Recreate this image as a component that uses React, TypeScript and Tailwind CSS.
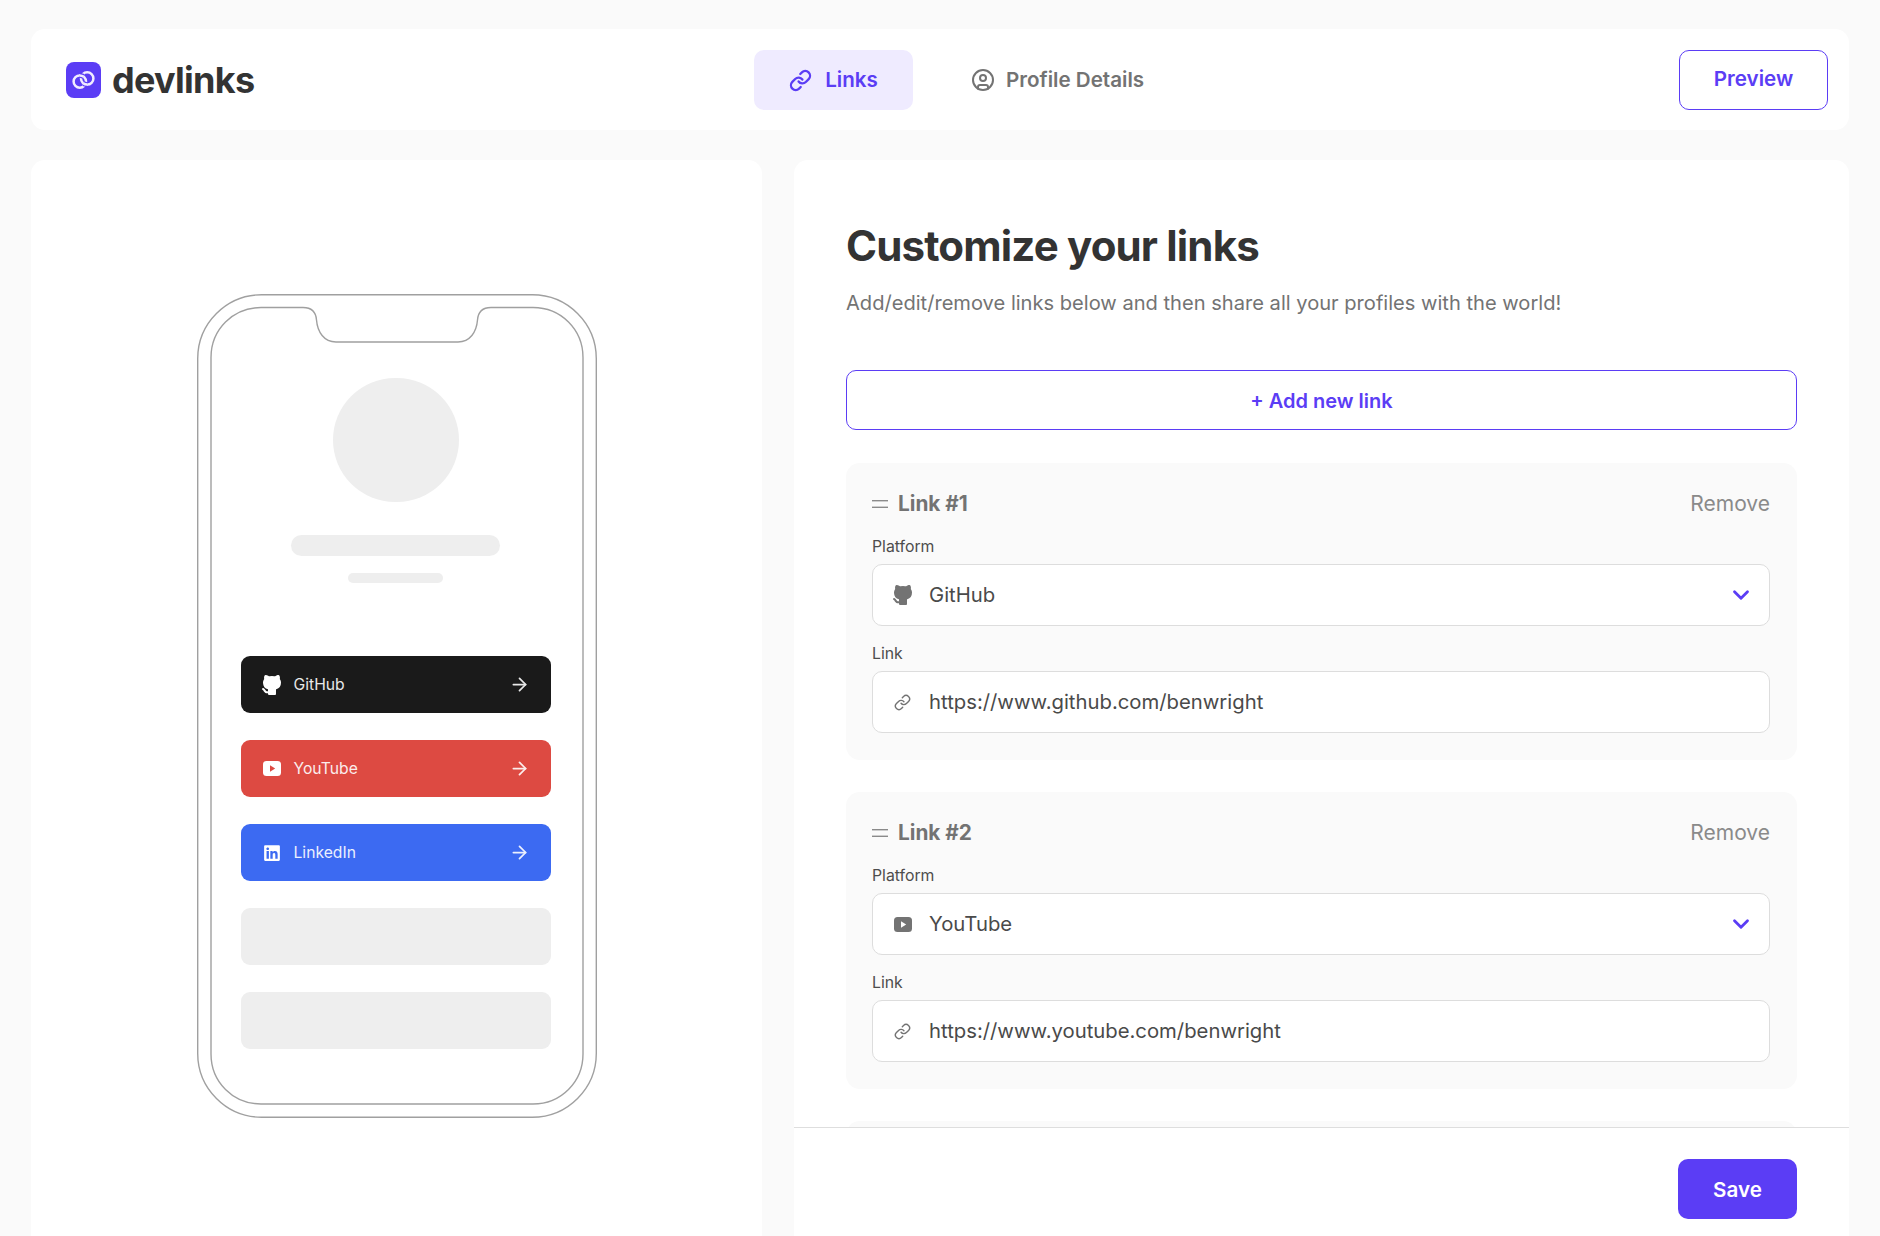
import { ArrowRight, ChevronDown, CircleUser, Link as LinkIcon } from "lucide-react";
import { FaLinkedin } from "react-icons/fa";
import { TbBrandGithubFilled } from "react-icons/tb";

function Logo() {
  return (
    <svg width="35" height="36" viewBox="0 0 35 36" className="shrink-0">
      <rect width="35" height="36" rx="8" fill="#5B3DF5" />
      <g fill="none" stroke="#f1edff" strokeWidth="2.5">
        <circle cx="13.8" cy="19.6" r="6.2" />
        <circle cx="21.2" cy="16.4" r="6.2" />
        <path d="M13.7 13.1 17.5 14.3M17.5 21.7 21.3 22.9" stroke="#5B3DF5" strokeWidth="5" />
        <path d="M13.2 13.4Q15.8 13.2 17.8 14.8M17.2 21.2Q19.2 22.8 21.8 22.6" />
      </g>
    </svg>
  );
}

function YouTubeIcon({ play }: { play: string }) {
  return (
    <svg width="18" height="15" viewBox="0 0 18 15" className="shrink-0">
      <rect width="18" height="15" rx="3.5" fill="currentColor" />
      <path d="M7 4.2 12.2 7.5 7 10.8Z" fill={play} />
    </svg>
  );
}

function DragHandle() {
  return (
    <svg width="16" height="8" viewBox="0 0 16 8" className="shrink-0">
      <rect y="0" width="16" height="1.4" fill="#8a8a8a" />
      <rect y="6.6" width="16" height="1.4" fill="#8a8a8a" />
    </svg>
  );
}

function PhoneFrame() {
  return (
    <svg width="400" height="824" viewBox="0 0 400 824" fill="none" stroke="#a0a0a0" strokeWidth="1.4" className="absolute inset-0">
      <rect x="0.7" y="0.7" width="398.6" height="822.6" rx="64" />
      <path d="M64 13.5H106C115 13.5 119 19 119.5 26C120.5 38 127 48 139 48H261C273 48 279.5 38 280.5 26C281 19 285 13.5 294 13.5H336C364 13.5 386 35.5 386 63.5V760C386 788 364 810 336 810H64C36 810 14 788 14 760V63.5C14 35.5 36 13.5 64 13.5Z" />
    </svg>
  );
}

function PreviewRow({ label, color, icon }: { label: string; color: string; icon: React.ReactNode }) {
  return (
    <div className={`flex h-[57px] items-center rounded-[9px] pl-[22px] pr-[21px] text-white ${color}`}>
      <span className="flex h-[24px] w-[31px] shrink-0 items-center">{icon}</span>
      <span className="flex-1 text-[15.7px] opacity-90">{label}</span>
      <ArrowRight size={21} strokeWidth={2} className="opacity-90" />
    </div>
  );
}

function PhonePreview() {
  return (
    <div className="relative h-[824px] w-[400px]">
      <PhoneFrame />
      <div className="relative flex h-full flex-col items-center pl-[44px] pr-[46px] pt-[84px]">
        <div className="h-[124px] w-[126px] rounded-full bg-[#eeeeee]" />
        <div className="mt-[33px] h-[21px] w-[209px] rounded-full bg-[#eeeeee]" />
        <div className="mt-[17px] h-[10px] w-[95px] rounded-full bg-[#eeeeee]" />
        <div className="mt-[73px] flex w-full flex-col gap-[27px]">
          <PreviewRow label="GitHub" color="bg-[#1a1a1a]" icon={<TbBrandGithubFilled size={24} className="-ml-[3px]" />} />
          <PreviewRow label="YouTube" color="bg-[#dd4a42]" icon={<YouTubeIcon play="#dd4a42" />} />
          <PreviewRow label="LinkedIn" color="bg-[#3c6af2]" icon={<FaLinkedin size={18} />} />
          <div className="h-[57px] rounded-[9px] bg-[#eeeeee]" />
          <div className="h-[57px] rounded-[9px] bg-[#eeeeee]" />
        </div>
      </div>
    </div>
  );
}

function Field({ label, icon, value, chevron }: { label: string; icon: React.ReactNode; value: string; chevron?: boolean }) {
  return (
    <div>
      <div className="mb-[8px] text-[15.8px] leading-[18px] text-[#4d4d4d]">{label}</div>
      <div className="flex h-[62px] items-center rounded-[10px] border border-[#dddddd] bg-white pl-[21px] pr-[15px] text-[20.3px] text-[#4a4a4a]">
        <span className="flex w-[35px] shrink-0 items-center text-[#737373]">{icon}</span>
        <span className="flex-1">{value}</span>
        {chevron && <ChevronDown size={26} strokeWidth={2.6} className="text-[#5B3DF5]" />}
      </div>
    </div>
  );
}

function LinkCard({ n, platform, icon, url }: { n: number; platform: string; icon: React.ReactNode; url: string }) {
  return (
    <div className="rounded-[14px] bg-[#fafafa] pb-[27px] pl-[26px] pr-[27px] pt-[29px]">
      <div className="flex h-[24px] items-center">
        <DragHandle />
        <span className="ml-[10px] flex-1 text-[20.8px] font-bold text-[#737373]">Link #{n}</span>
        <span className="text-[21px] text-[#8a8a8a]">Remove</span>
      </div>
      <div className="mt-[22px] flex flex-col gap-[19px]">
        <Field label="Platform" icon={icon} value={platform} chevron />
        <Field label="Link" icon={<LinkIcon size={17} strokeWidth={2} />} value={url} />
      </div>
    </div>
  );
}

export default function App() {
  return (
    <div className="flex h-screen flex-col gap-[30px] overflow-hidden bg-[#fafafa] pl-[31px] pr-[31px] pt-[29px] text-[#333333] [font-family:Inter,sans-serif]">
      {/* Header */}
      <header className="flex h-[101px] shrink-0 items-center rounded-[14px] bg-white pl-[35px] pr-[21px]">
        <div className="flex w-[688px] items-center gap-[11px]">
          <Logo />
          <span className="text-[36px] font-bold tracking-[-0.02em]">devlinks</span>
        </div>
        <nav className="flex items-center gap-[2px] text-[20.6px] font-semibold">
          <div className="flex h-[60px] w-[159px] items-center justify-center gap-[13px] rounded-[10px] bg-[#EFEBFF] pt-[1px] text-[#5B3DF5]">
            <LinkIcon size={23} strokeWidth={2.4} />
            Links
          </div>
          <div className="flex h-[60px] items-center gap-[11px] px-[56px] pt-[1px] text-[#737373]">
            <CircleUser size={24} strokeWidth={2} />
            Profile Details
          </div>
        </nav>
        <button className="ml-auto h-[60px] w-[149px] rounded-[10px] border-[1.5px] border-[#5B3DF5] text-[20.6px] font-semibold text-[#5B3DF5]">
          Preview
        </button>
      </header>

      <main className="flex min-h-0 flex-1 gap-[32px]">
        {/* Phone */}
        <section className="flex w-[731px] shrink-0 justify-center rounded-t-[14px] bg-white pt-[134px]">
          <PhonePreview />
        </section>

        {/* Editor */}
        <section className="flex min-w-0 flex-1 flex-col rounded-t-[14px] bg-white">
          <div className="min-h-0 flex-1 overflow-hidden px-[52px] pt-[60px]">
            <h1 className="text-[42px] font-bold leading-[52px] tracking-[-0.02em]">Customize your links</h1>
            <p className="mt-[18px] text-[20.1px] leading-[26px] text-[#737373]">
              Add/edit/remove links below and then share all your profiles with the world!
            </p>
            <button className="mt-[54px] h-[60px] w-full rounded-[10px] border-[1.5px] border-[#5B3DF5] pt-[2px] text-[20px] font-semibold text-[#5B3DF5]">
              + Add new link
            </button>
            <div className="mt-[33px] flex flex-col gap-[32px]">
              <LinkCard n={1} platform="GitHub" icon={<TbBrandGithubFilled size={24} className="-ml-[3px]" />} url="https://www.github.com/benwright" />
              <LinkCard n={2} platform="YouTube" icon={<YouTubeIcon play="#ffffff" />} url="https://www.youtube.com/benwright" />
              <div className="h-[100px] rounded-[14px] bg-[#fafafa]" />
            </div>
          </div>
          <footer className="flex h-[109px] shrink-0 items-start justify-end border-t border-[#dedede] pr-[52px] pt-[31px]">
            <button className="h-[60px] w-[119px] rounded-[10px] bg-[#5B3DF5] pt-[2px] text-[20.6px] font-semibold text-white">Save</button>
          </footer>
        </section>
      </main>
    </div>
  );
}
